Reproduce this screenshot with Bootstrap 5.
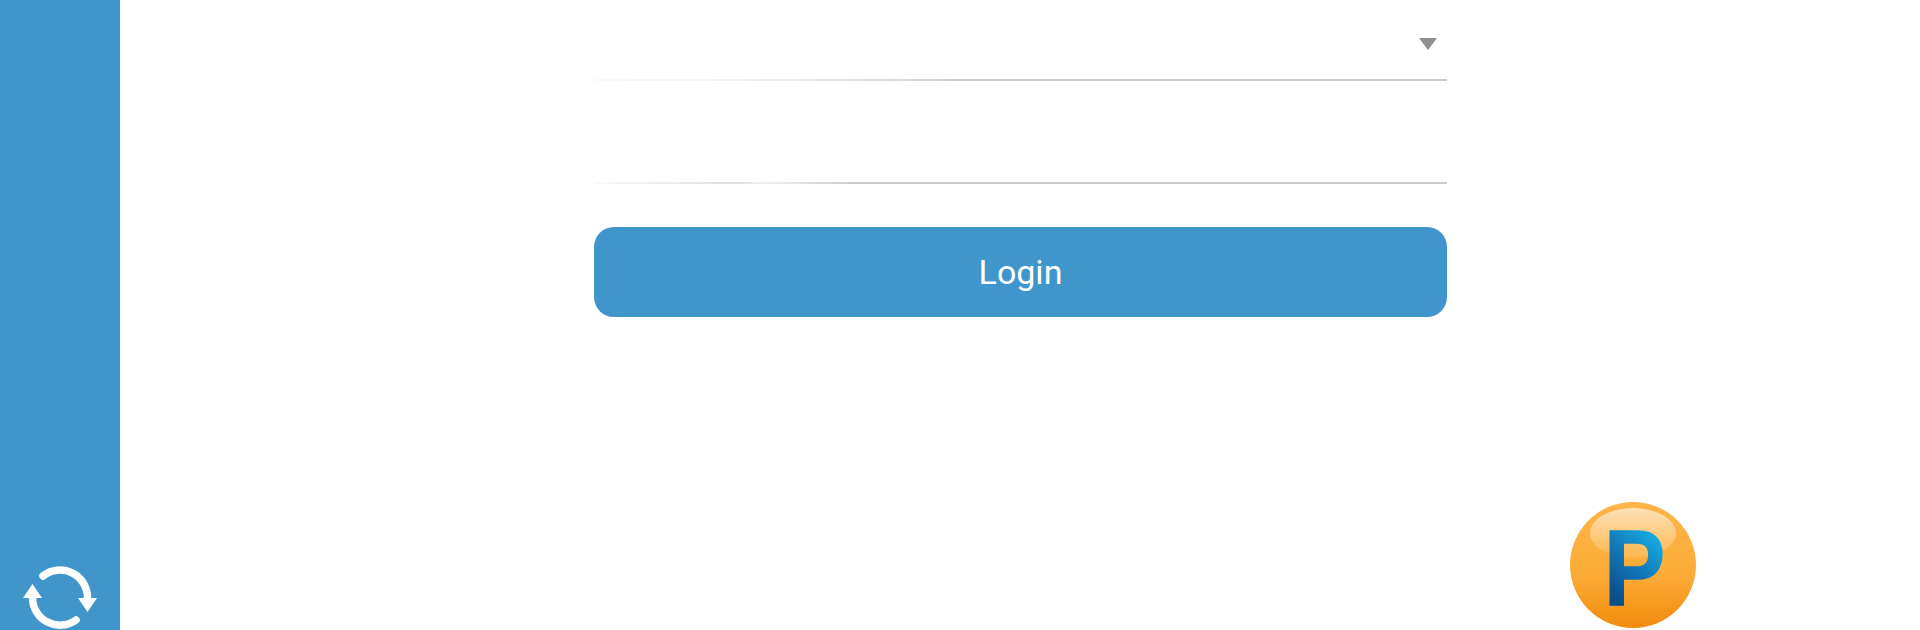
<!DOCTYPE html>
<html lang="en">
<head>
  <meta charset="UTF-8">
  <meta name="viewport" content="width=device-width, initial-scale=1.0">
  <title>Login</title>
  <link href="https://cdn.jsdelivr.net/npm/bootstrap@5.3.0/dist/css/bootstrap.min.css" rel="stylesheet">
  <style>
    html, body {
      height: 100%;
      margin: 0;
      overflow: hidden;
      background-color: #ffffff;
    }
    .side-rail {
      width: 120px;
      background-color: #4096cb;
    }
    .side-rail svg {
      display: block;
      margin-bottom: 1px;
    }
    .login-pane {
      width: 853px;
      margin-left: 474px;
    }
    .login-field {
      background-repeat: no-repeat;
      background-position: left bottom;
      background-size: 100% 2px;
    }
    .field-server {
      height: 81px;
      background-image: linear-gradient(90deg, #fafafa 0, #eeeeee 20%, #d6d6d6 38%, #cccccc 45%);
    }
    .field-password {
      height: 103px;
      background-image: linear-gradient(90deg, #fafafa 0, #dddddd 17%, #f0f0f0 20%, #cccccc 30%);
    }
    .login-field .form-control,
    .login-field .form-select {
      height: 100%;
      border: 0;
      border-radius: 0;
      background: transparent;
      box-shadow: none;
    }
    .select-caret {
      position: absolute;
      top: 38px;
      right: 10px;
      width: 0;
      height: 0;
      border-left: 9px solid transparent;
      border-right: 9px solid transparent;
      border-top: 12px solid #8f8f8f;
      pointer-events: none;
    }
    .login-btn {
      height: 90px;
      margin-top: 43px;
      border: 0;
      border-radius: 20px;
      background-color: #4096cb;
      color: #ffffff;
      font-family: Roboto, "Liberation Sans", sans-serif;
      font-size: 34px;
    }
    .login-btn:hover {
      background-color: #4096cb;
      color: #ffffff;
    }
    .brand-row {
      padding-right: 223px;
      padding-bottom: 1px;
    }
    .brand-letter {
      font-family: "Liberation Sans", sans-serif;
      font-weight: 700;
      font-size: 108px;
    }
  </style>
</head>
<body class="d-flex">
  <aside class="side-rail d-flex flex-column justify-content-end align-items-center flex-shrink-0">
    <svg width="80" height="66" viewBox="0 -6 80 66" aria-label="Refresh">
      <g fill="none" stroke="#ffffff" stroke-width="7.500" stroke-linecap="round">
        <path d="M23 7 A27.500 27.500 0 0 1 67.500 29"/>
        <path d="M12.500 29 A27.500 27.500 0 0 0 56 51"/>
      </g>
      <path fill="#ffffff" d="M58 29 H77 L67.500 43 Z M3 29 H22 L12.500 15 Z"/>
    </svg>
  </aside>
  <main class="flex-grow-1 d-flex flex-column">
    <form class="login-pane d-flex flex-column">
      <div class="login-field field-server position-relative">
        <select class="form-select" aria-label="Server"></select>
        <span class="select-caret"></span>
      </div>
      <div class="login-field field-password">
        <input class="form-control" type="password" aria-label="Password">
      </div>
      <button class="btn login-btn w-100" type="button">Login</button>
    </form>
    <div class="brand-row d-flex justify-content-end mt-auto">
      <svg width="128" height="128" viewBox="0 0 128 128" aria-label="Logo">
        <defs>
          <linearGradient id="orb" x1="0" y1="0" x2="0" y2="1">
            <stop offset="0" stop-color="#fdb549"/>
            <stop offset="0.6" stop-color="#fbab36"/>
            <stop offset="1" stop-color="#f18a0c"/>
          </linearGradient>
          <linearGradient id="gloss" x1="0" y1="0" x2="0" y2="1">
            <stop offset="0" stop-color="#ffffff" stop-opacity="0.6"/>
            <stop offset="1" stop-color="#ffffff" stop-opacity="0.1"/>
          </linearGradient>
          <linearGradient id="letter" gradientUnits="userSpaceOnUse" x1="66" y1="-68" x2="14" y2="-4">
            <stop offset="0" stop-color="#18aee6"/>
            <stop offset="0.5" stop-color="#1277b5"/>
            <stop offset="1" stop-color="#064f8c"/>
          </linearGradient>
        </defs>
        <circle cx="64" cy="64" r="63" fill="url(#orb)"/>
        <ellipse cx="64" cy="32" rx="43" ry="25" fill="url(#gloss)"/>
        <text class="brand-letter" transform="translate(35 104) scale(0.85 1)" fill="url(#letter)" stroke="url(#letter)" stroke-width="1.500">P</text>
      </svg>
    </div>
  </main>
  <script src="https://cdn.jsdelivr.net/npm/bootstrap@5.3.0/dist/js/bootstrap.bundle.min.js"></script>
</body>
</html>
